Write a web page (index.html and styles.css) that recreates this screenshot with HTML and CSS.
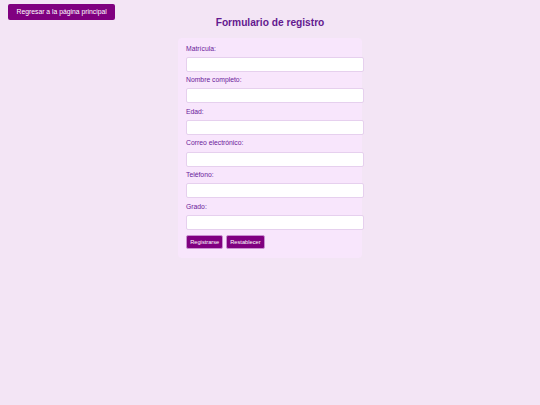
FILE: index.html
```html
<!DOCTYPE html>
<html lang="es">
<head>
<meta charset="utf-8">
<title>Formulario de registro</title>
<link rel="stylesheet" href="styles.css">
</head>
<body>
<header class="top">
  <div class="top-left"><button class="back-btn" type="button">Regresar a la página principal</button></div>
  <h1 class="title">Formulario de registro</h1>
  <div class="top-right"></div>
</header>
<form class="card">
  <label class="field-label" for="matricula">Matrícula:</label>
  <input class="field-input" id="matricula" type="text">
  <label class="field-label" for="nombre">Nombre completo:</label>
  <input class="field-input" id="nombre" type="text">
  <label class="field-label" for="edad">Edad:</label>
  <input class="field-input" id="edad" type="text">
  <label class="field-label" for="correo">Correo electrónico:</label>
  <input class="field-input" id="correo" type="text">
  <label class="field-label" for="telefono">Teléfono:</label>
  <input class="field-input" id="telefono" type="text">
  <label class="field-label" for="grado">Grado:</label>
  <input class="field-input" id="grado" type="text">
  <div class="actions">
    <button class="action-btn" type="submit">Registrarse</button>
    <button class="action-btn" type="reset">Restablecer</button>
  </div>
</form>
</body>
</html>
```

FILE: styles.css
```css
html, body {
  margin: 0;
  padding: 0;
}
body {
  background: #f3e5f5;
  font-family: "Liberation Sans", Arial, sans-serif;
  font-size: 6.8px;
  color: #6a1b9a;
  min-height: 405px;
}
.top {
  display: grid;
  grid-template-columns: 1fr auto 1fr;
  padding: 4px 8px 0 8px;
}
.top-left {
  align-self: start;
}
.back-btn {
  font-family: "Liberation Sans", Arial, sans-serif;
  font-size: 6.8px;
  background: #800080;
  color: #fff;
  border: none;
  border-radius: 2px;
  padding: 4px 8.5px;
  line-height: 7.7px;
  cursor: pointer;
  display: block;
}
.title {
  margin: 12.7px 0 0 0;
  font-size: 10.2px;
  font-weight: bold;
  line-height: 11.5px;
  color: #63198f;
  text-align: center;
}
.card {
  width: 168px;
  margin: 9.6px auto 0 auto;
  padding: 6.9px 8px 9px 8px;
  background: #f8e6fc;
  border-radius: 4px;
  display: flex;
  flex-direction: column;
  align-items: flex-start;
}
.field-label {
  display: block;
  font-size: 6.8px;
  line-height: 8px;
  margin-bottom: 4.2px;
  color: #6a1b9a;
}
.field-input {
  display: block;
  width: 100%;
  box-sizing: content-box;
  font-family: "Liberation Sans", Arial, sans-serif;
  font-size: 6.8px;
  line-height: 8px;
  height: 8px;
  padding: 2.5px 4px;
  border: 1px solid #e6d0ee;
  border-radius: 2px;
  background: #fff;
  margin: 0 0 4.4px 0;
}
.actions {
  display: flex;
  gap: 2.6px;
  margin-top: 1px;
}
.action-btn {
  font-family: "Liberation Sans", Arial, sans-serif;
  font-size: 5.7px;
  line-height: 6.6px;
  background: #800080;
  color: #fff;
  border: 1px solid #c98fd0;
  border-radius: 2px;
  padding: 2.7px 3.2px;
  cursor: pointer;
}
```
